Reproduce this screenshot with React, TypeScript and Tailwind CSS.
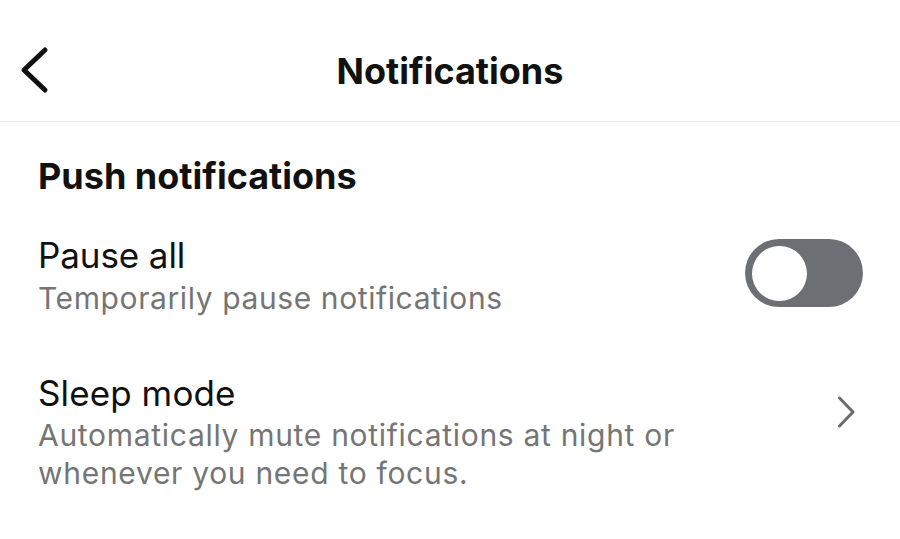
import React from 'react'

const font = { fontFamily: 'Inter, "Noto Sans", sans-serif' }

const Toggle: React.FC<{ on?: boolean }> = ({ on = false }) => (
  <div
    className={`mr-[-1px] mt-[4px] flex h-[68px] w-[118px] shrink-0 items-center rounded-full px-[7px] ${
      on ? 'justify-end bg-[#0095f6]' : 'justify-start bg-[#6c6f74]'
    }`}
  >
    <div className="h-[55px] w-[55px] rounded-full bg-white" />
  </div>
)

const ChevronRight = () => (
  <svg width="24" height="34" viewBox="0 0 24 34" fill="none" className="mr-[3px] mt-[22px] shrink-0">
    <path d="M4.5 3 L18 17 L4.5 31" stroke="#6b6b6b" strokeWidth="3" strokeLinecap="round" strokeLinejoin="round" />
  </svg>
)

export default function App() {
  return (
    <div className="h-[539px] w-[900px] overflow-hidden bg-white text-[#111]" style={font}>
      {/* top bar */}
      <div className="relative flex h-[122px] items-center justify-center border-b border-[#ececec] pt-[20px]">
        <button className="absolute left-[18px] top-[44px]">
          <svg width="34" height="52" viewBox="0 0 34 52" fill="none">
            <path d="M27 6 L6 26 L27 46" stroke="#111" strokeWidth="5" strokeLinecap="round" strokeLinejoin="round" />
          </svg>
        </button>
        <h1 className="text-[36px] font-bold leading-[44px]">Notifications</h1>
      </div>

      <div className="px-[38px] pt-[32px]">
        <h2 className="text-[36px] font-bold leading-[44px]">Push notifications</h2>

        {/* pause all */}
        <div className="mt-[37px] flex items-start justify-between">
          <div>
            <div className="text-[35px] leading-[40px] tracking-[-0.1px]">Pause all</div>
            <div className="mt-[3px] text-[30px] leading-[40px] tracking-[0.6px] text-[#757575]">
              Temporarily pause notifications
            </div>
          </div>
          <Toggle />
        </div>

        {/* sleep mode */}
        <div className="mt-[55px] flex items-start justify-between">
          <div className="w-[720px]">
            <div className="text-[35px] leading-[40px] tracking-[0.1px]">Sleep mode</div>
            <div className="mt-[3px] text-[30px] leading-[38px] tracking-[0.7px] text-[#757575]">
              Automatically mute notifications at night or whenever you need to focus.
            </div>
          </div>
          <ChevronRight />
        </div>
      </div>
    </div>
  )
}
